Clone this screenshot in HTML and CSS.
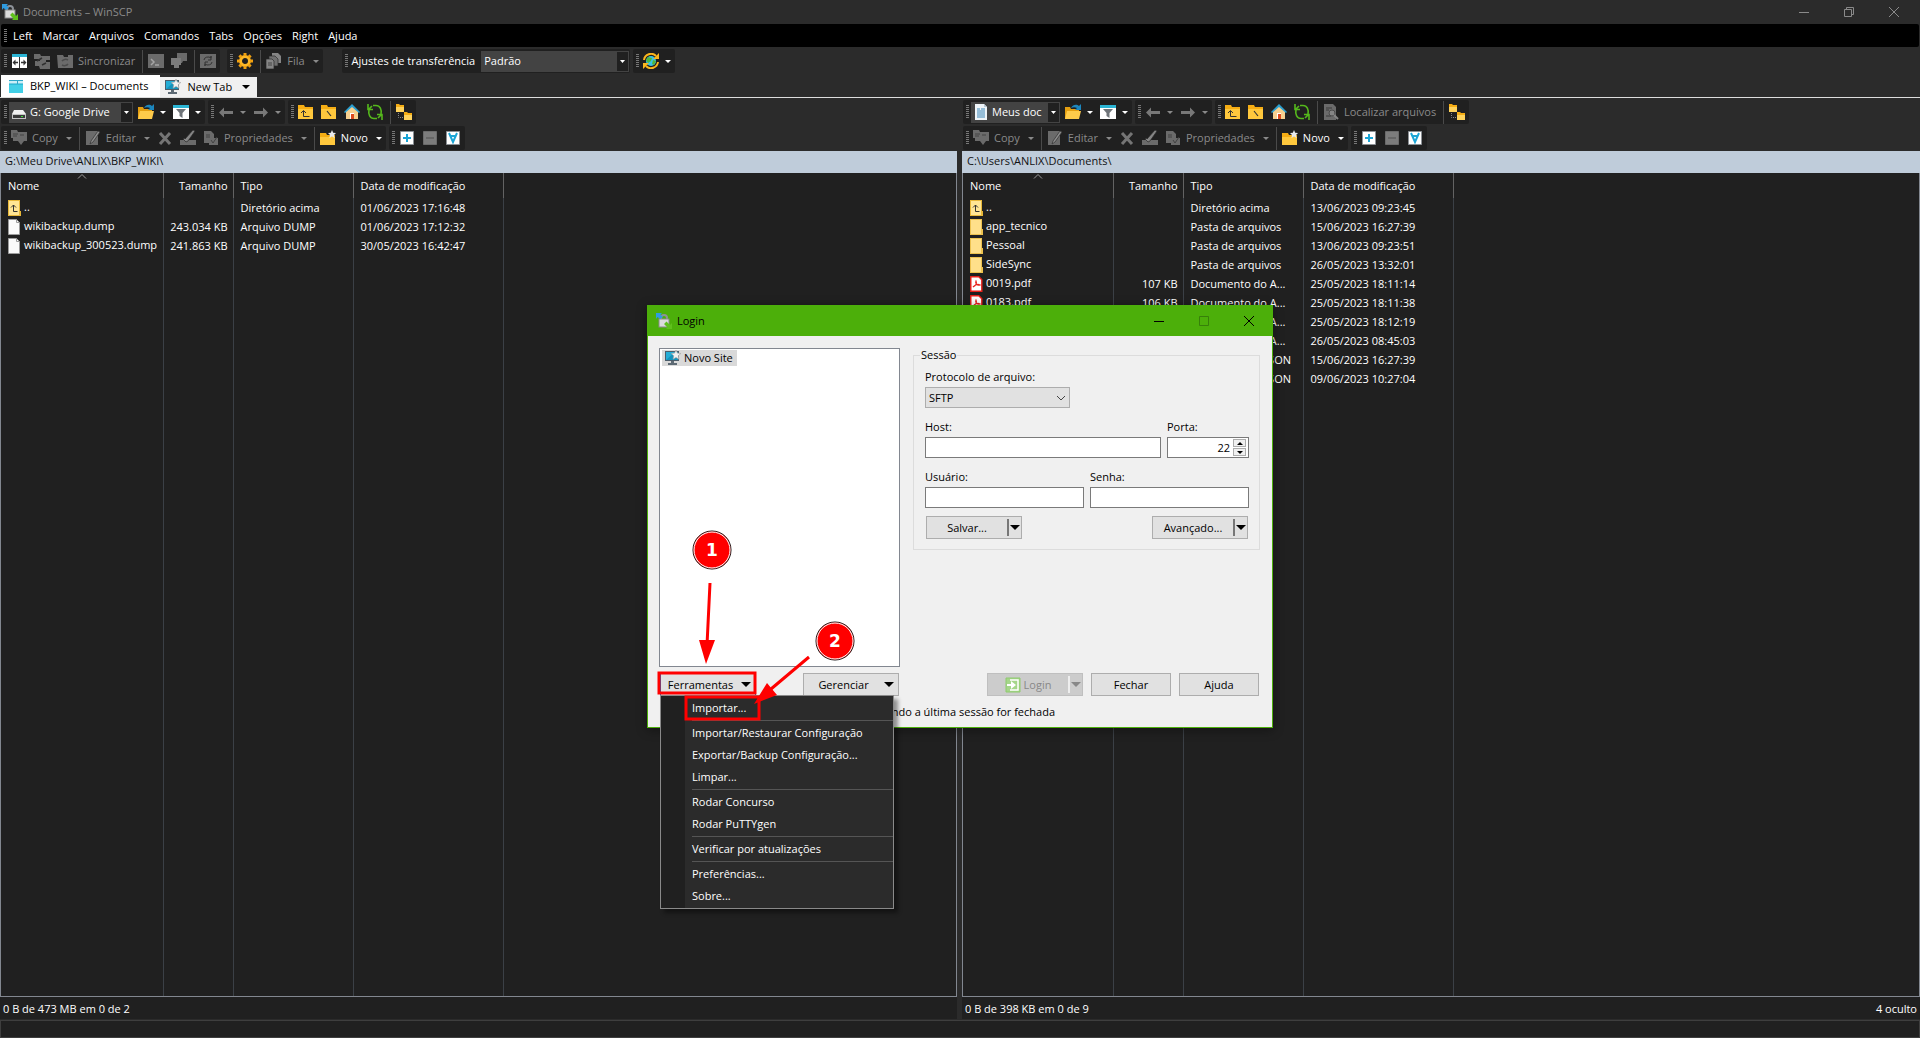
FILE: index.html
```html
<!DOCTYPE html>
<html lang="pt-BR">
<head>
  <meta charset="UTF-8">
  <meta name="viewport" content="width=device-width, initial-scale=1.0">
  <title>Documents – WinSCP</title>
  <link rel="stylesheet" href="styles.css">
</head>
<body>
  <!-- Icon sprite -->
  <svg class="sprite" aria-hidden="true">
    <symbol id="i-app" viewBox="0 0 16 16">
      <path d="M5 7V5a3 3 0 0 1 6 0v2" fill="none" stroke="#8d9299" stroke-width="2"/>
      <rect x="3" y="6" width="10" height="8" fill="#dcdcdc" stroke="#8a8a8a"/>
      <path d="M0 0h6L4.500 1.500 7 4 4 6 1.500 4 0 6z" fill="#2f9be0"/>
      <path d="M16 16h-6l1.500-1.500L8 11l2.500-2.500L14 12l2-2z" fill="#5fc01c"/>
    </symbol>
    <symbol id="i-sync-browse" viewBox="0 0 16 16">
      <path d="M1 1h15v14H1z" fill="#fff"/><path d="M1 1h15v3H1z" fill="#2bb4d4"/>
      <path d="M8.500 4v11" stroke="#333"/><path d="M4 9.500h3M10 9.500h3" stroke="#333" stroke-width="1.500"/>
      <path d="M1.500 9.500l3-3v6zM15.500 9.500l-3-3v6z" fill="#333"/>
    </symbol>
    <symbol id="i-compare" viewBox="0 0 16 16">
      <path d="M0 1h6l1 2h9v4h-4v2h4v7H6l-1-3H1V8h5V6H0z" fill="#6b6b6b"/><path d="M3 8l5-3M8 12l4-2" stroke="#303030" stroke-width="1.500"/>
    </symbol>
    <symbol id="i-sync" viewBox="0 0 16 16">
      <path d="M0 2h6l1 2h4V2h5v13H1z" fill="#6b6b6b"/><path d="M5 8a4 3 0 0 1 6-1M11 11a4 3 0 0 1-6 1" fill="none" stroke="#4b4b4b" stroke-width="1.500"/>
    </symbol>
    <symbol id="i-term" viewBox="0 0 16 16">
      <path d="M0 1h16v14H0z" fill="#6b6b6b"/><path d="M3 6l3 3-3 3M7 12h4" fill="none" stroke="#a5a5a5" stroke-width="1.500"/>
    </symbol>
    <symbol id="i-putty" viewBox="0 0 16 16">
      <path d="M6 0h10v8h-4l-1 2H0V5h6z" fill="#6b6b6b"/><path d="M0 5h10v7H0zM3 12h5v3H3z" fill="#7c7c7c"/>
    </symbol>
    <symbol id="i-keep" viewBox="0 0 16 16">
      <path d="M0 1h16v14H0z" fill="#6b6b6b"/><path d="M4 7a4 3 0 0 1 7-2V3v4H8M12 9a4 3 0 0 1-7 2v2V9h3" fill="none" stroke="#333"/>
    </symbol>
    <symbol id="i-gear" viewBox="0 0 16 16">
      <circle cx="8" cy="8" r="4.500" fill="none" stroke="#fdb827" stroke-width="3"/>
      <path d="M8 0v3M8 13v3M0 8h3M13 8h3M2.400 2.400l2 2M11.600 11.600l2 2M2.400 13.600l2-2M11.600 4.400l2-2" stroke="#f0a010" stroke-width="3"/>
    </symbol>
    <symbol id="i-queue" viewBox="0 0 16 16">
      <path d="M6 0h6l3 3v7H6z" fill="#858585"/><path d="M3 3h6l3 3v7H3z" fill="#707070" stroke="#292929" stroke-width=".7"/><path d="M0 6h6l2 2v8H0z" fill="#858585" stroke="#292929" stroke-width=".7"/><path d="M2 10h4M2 12h4" stroke="#444"/>
    </symbol>
    <symbol id="i-globe" viewBox="0 0 16 16">
      <circle cx="8" cy="8" r="5" fill="#38c4e4"/><path d="M5 4l4 1-1 3-3 2-2-3zM10 7l3 1-2 4-2-1z" fill="#4fb73a"/>
      <path d="M1 7a7 7 0 0 1 12-4M15 9a7 7 0 0 1-12 4" fill="none" stroke="#fbb61c" stroke-width="2"/>
      <path d="M16 0v6h-6zM0 16v-6h6z" fill="#fbb61c"/>
    </symbol>
    <symbol id="i-tab" viewBox="0 0 16 16">
      <path d="M1 2h14v13H1z" fill="#42cfe6"/><path d="M1 3h14v3H1z" fill="#c9eef7"/><path d="M1 6h14" stroke="#1ba8c8"/><path d="M1 2h14v1H1z" fill="#2da6c8"/><path d="M9.500 3v3" fill="none" stroke="#2da6c8"/>
    </symbol>
    <symbol id="i-site" viewBox="0 0 16 16">
      <path d="M0 1h14v10H0z" fill="#4b5d6b"/><path d="M1 2h12v8H1z" fill="#24add6"/><path d="M1 10l9-8h3v8z" fill="#1493bd"/><path d="M6 11h3v2H6zM3 13h9v2H3z" fill="#5d6a74"/>
      <path d="M11 0l1.400 3.100 3.400.4-2.500 2.300.7 3.400-3-1.700-3 1.700.7-3.400L6.200 3.500l3.400-.4z" fill="#f2f2f2" stroke="#9c9c9c" stroke-width=".6"/>
    </symbol>
    <symbol id="i-drive" viewBox="0 0 16 16">
      <path d="M3 6h9l3 4H1z" fill="#f1f1f1"/><path d="M1 10h14v5H1z" fill="#c5c5c5"/><path d="M2 11h12v3H2z" fill="#3a3a3a"/><path d="M10 12h2v1h-2z" fill="#3fe03f"/>
    </symbol>
    <symbol id="i-docs" viewBox="0 0 16 16">
      <path d="M2 0h9l3 3v13H2z" fill="#eef4f8"/><path d="M4 5h3M8 5h4M4 7h8M4 9h8M4 11h8M4 13h8" stroke="#3c87b8"/><path d="M11 0v3h3" fill="#b9c9d4"/>
    </symbol>
    <symbol id="i-open" viewBox="0 0 16 16">
      <path d="M0 3h5l1 2h8v10H0z" fill="#e59f10"/><path d="M2 7h14l-2 8H0z" fill="#ffcb4a"/><path d="M6 4c2-4 6-4 8-2l2-2v6h-6l2-2c-2-1-4-1-6 0z" fill="#1c86bd"/>
    </symbol>
    <symbol id="i-filter" viewBox="0 0 16 16">
      <path d="M0 1h16v14H0z" fill="#fff"/><path d="M0 1h16v3H0z" fill="#2bb4d4"/><path d="M3 5h10L9.500 9v5l-3-2V9z" fill="#6f7479"/>
    </symbol>
    <symbol id="i-back" viewBox="0 0 16 16"><path d="M1 8.500l5-5v3.500h9v3H6v3.500z" fill="#787878"/></symbol>
    <symbol id="i-fwd" viewBox="0 0 16 16"><path d="M15 8.500l-5-5v3.500H1v3h9v3.500z" fill="#787878"/></symbol>
    <symbol id="i-up" viewBox="0 0 16 16">
      <path d="M0 1h6l1 2h8v12H0z" fill="#f5ad14"/><path d="M0 5h15v10H0z" fill="#ffc83d"/><path d="M5.500 7v5.500h6M3 9l2.500-2.500L8 9" fill="none" stroke="#333"/>
    </symbol>
    <symbol id="i-root" viewBox="0 0 16 16">
      <path d="M0 1h6l1 2h8v12H0z" fill="#f5ad14"/><path d="M0 5h15v10H0z" fill="#ffc83d"/><path d="M6 7l4 5" stroke="#333" stroke-width="1.200"/>
    </symbol>
    <symbol id="i-home" viewBox="0 0 16 16">
      <path d="M2 7l6-6 6 6v8H2z" fill="#f6d08f"/><path d="M0 8l8-8 8 8-1 1-7-6-7 6z" fill="#2b9fd0"/><path d="M6 9h4v6H6z" fill="#fff"/><path d="M7 10h3v5H7z" fill="#dd4b1f"/>
    </symbol>
    <symbol id="i-refresh" viewBox="0 0 16 16">
      <path d="M6 1.500h3c4 0 6 4 5 9M10 14.500H7c-4 0-6-4-5-9" fill="none" stroke="#55b81c" stroke-width="1.600"/>
      <path d="M1 0v5.500h5M15 16v-5.500h-5M2 5l3-3M14 11l-3 3" fill="none" stroke="#55b81c" stroke-width="1.600"/>
    </symbol>
    <symbol id="i-tree" viewBox="0 0 16 16">
      <path d="M0 0h3l1 1h4v7H0zM8 8h3l1 1h4v7H8z" fill="#f5ad14"/><path d="M0 3h8v5H0zM8 11h8v5H8z" fill="#ffd35c"/><path d="M2.500 9v4.500H8" fill="none" stroke="#8b8b8b" stroke-dasharray="1 1"/>
    </symbol>
    <symbol id="i-find" viewBox="0 0 16 16">
      <path d="M1 0h9l3 3v13H1z" fill="#6b6b6b"/><path d="M3 4h6M3 6h3M3 12h5" stroke="#3a3a3a"/><circle cx="9" cy="9" r="3" fill="#858585" stroke="#4a4a4a"/><path d="M11 11l4 4" stroke="#858585" stroke-width="2"/>
    </symbol>
    <symbol id="i-copy" viewBox="0 0 16 16">
      <path d="M0 0h6l1 2h9v9h-3l-3 4-3-4H2V8H0z" fill="#6b6b6b"/><path d="M2 4h5M2 6h4M9 5h4" stroke="#454545"/>
    </symbol>
    <symbol id="i-edit" viewBox="0 0 16 16">
      <path d="M1 1h12v14H1z" fill="#6b6b6b"/><path d="M6 11l7-10 2 1-7 10-3 2z" fill="#8d8d8d" stroke="#303030" stroke-width=".7"/>
    </symbol>
    <symbol id="i-del" viewBox="0 0 16 16"><path d="M3 3l10 11M13 3L3 14" stroke="#757575" stroke-width="3"/></symbol>
    <symbol id="i-rename" viewBox="0 0 16 16">
      <path d="M0 10h16v5H0z" fill="#6b6b6b"/><path d="M5 9l8-9 2 1-7 10-2 1-3-3 2-1z" fill="#858585" stroke="#292929" stroke-width=".7"/>
    </symbol>
    <symbol id="i-props" viewBox="0 0 16 16">
      <path d="M1 1h7l3 3v4h4v7H6v-2H1z" fill="#6b6b6b"/><path d="M3 5h4M3 7h4M8 10l2 3 4-6" fill="none" stroke="#424242"/>
    </symbol>
    <symbol id="i-new" viewBox="0 0 16 16">
      <path d="M0 3h6l1 2h8v10H0z" fill="#f5ad14"/><path d="M0 7h15v8H0z" fill="#ffc83d"/>
      <path d="M12 0l1.200 2.700 2.800.3-2 2 .6 3-2.600-1.500L9.400 8l.6-3-2-2 2.800-.3z" fill="#e8eaec"/>
    </symbol>
    <symbol id="i-plus" viewBox="0 0 16 16"><path d="M1.500 1.500h13v13h-13z" fill="#fff" stroke="#8c9196"/><path d="M4 8h8M8 4v8" stroke="#1ba5d6" stroke-width="2"/></symbol>
    <symbol id="i-minus" viewBox="0 0 16 16"><path d="M1.500 1.500h13v13h-13z" fill="#7c7c7c" stroke="#6b6b6b"/><path d="M4 8h8" stroke="#666" stroke-width="2"/></symbol>
    <symbol id="i-sel" viewBox="0 0 16 16"><path d="M1.500 1.500h13v13h-13z" fill="#fff" stroke="#8c9196"/><path d="M4 3l4 9 4-9M6 6h4" fill="none" stroke="#1ba5d6" stroke-width="2"/></symbol>
    <symbol id="i-parent" viewBox="0 0 13 16"><path d="M0 0h12v11h1v5H0z" fill="#e8b83a"/><path d="M1 1h10v14H1z" fill="#ffe594"/><path d="M5.500 5v6.500h4M3 7.500l2.500-2.500L8 7.500" fill="none" stroke="#333"/></symbol>
    <symbol id="i-folder" viewBox="0 0 13 16"><path d="M0 0h12v10h1v6H0z" fill="#edc24f"/><path d="M1 1h10v14H1z" fill="#ffe08a"/></symbol>
    <symbol id="i-file" viewBox="0 0 13 16"><path d="M.5.5h8l3 3v12H.5z" fill="#fafafa" stroke="#9c9c9c"/><path d="M8.500.5v3h3" fill="none" stroke="#9c9c9c"/></symbol>
    <symbol id="i-pdf" viewBox="0 0 13 16"><path d="M.8.8h8l3 3v11.400H.8z" fill="#fff" stroke="#e8201a" stroke-width="1.400"/><path d="M3 11c3-1 4-4 3-6-1 2 1 5 4 4-2-1-5 0-7 2z" fill="none" stroke="#e8201a" stroke-width="1.200"/></symbol>
    <symbol id="i-login" viewBox="0 0 16 16"><path d="M1 1h14v14H1z" fill="#a5d68a" stroke="#8fca6e"/><path d="M5 3h8v10H5" fill="none" stroke="#fff" stroke-width="1.500"/><path d="M2 7h4V4l5 4-5 4V9H2z" fill="#fff"/></symbol>
    <symbol id="i-sort" viewBox="0 0 10 5"><path d="M1 4.500l4-4 4 4" fill="none" stroke="#9b9b9b"/></symbol>
  </svg>

  <div class="window">
    <header class="titlebar">
      <svg class="icon"><use href="#i-app"/></svg>
      <span>Documents – WinSCP</span>
      <div class="window-buttons">
        <button type="button" aria-label="Minimizar"><svg viewBox="0 0 10 10"><path d="M0 5.500h10"/></svg></button>
        <button type="button" aria-label="Restaurar"><svg viewBox="0 0 10 10"><path d="M.5 2.500h7v7h-7zM2.500 2.500v-2h7v7h-2"/></svg></button>
        <button type="button" aria-label="Fechar janela"><svg viewBox="0 0 10 10"><path d="M0 0l10 10M10 0L0 10"/></svg></button>
      </div>
    </header>

    <nav class="menubar">
      <i class="grip"></i>
      <button type="button">Left</button>
      <button type="button">Marcar</button>
      <button type="button">Arquivos</button>
      <button type="button">Comandos</button>
      <button type="button">Tabs</button>
      <button type="button">Opções</button>
      <button type="button">Right</button>
      <button type="button">Ajuda</button>
    </nav>

    <div class="toolbar-row main-tools">
      <div class="toolbar">
        <i class="grip"></i>
        <button type="button" aria-label="Navegação sincronizada"><svg class="icon"><use href="#i-sync-browse"/></svg></button>
        <button type="button" disabled aria-label="Comparar"><svg class="icon"><use href="#i-compare"/></svg></button>
        <button type="button" disabled><svg class="icon"><use href="#i-sync"/></svg>Sincronizar</button>
        <i class="sep"></i>
        <button type="button" disabled aria-label="Terminal"><svg class="icon"><use href="#i-term"/></svg></button>
        <button type="button" disabled aria-label="PuTTY"><svg class="icon"><use href="#i-putty"/></svg></button>
        <i class="sep"></i>
        <button type="button" disabled aria-label="Manter atualizado"><svg class="icon"><use href="#i-keep"/></svg></button>
      </div>
      <div class="toolbar">
        <i class="grip"></i>
        <button type="button" aria-label="Preferências"><svg class="icon"><use href="#i-gear"/></svg></button>
        <i class="sep"></i>
        <button type="button" disabled><svg class="icon"><use href="#i-queue"/></svg>Fila<i class="caret"></i></button>
      </div>
      <div class="toolbar transfer-tools">
        <i class="grip"></i>
        <label for="transfer">Ajustes de transferência</label>
        <select id="transfer" class="dark-select"><option>Padrão</option></select>
      </div>
      <div class="toolbar">
        <i class="grip"></i>
        <button type="button" aria-label="Atualizações"><svg class="icon"><use href="#i-globe"/></svg><i class="caret"></i></button>
      </div>
    </div>

    <div class="tabs">
      <button type="button" class="tab active"><svg class="icon"><use href="#i-tab"/></svg>BKP_WIKI – Documents</button>
      <button type="button" class="tab"><svg class="icon"><use href="#i-site"/></svg>New Tab<i class="caret big"></i></button>
    </div>

    <main class="panels">
      <section class="panel">
        <div class="toolbar-row">
          <div class="toolbar">
            <i class="grip"></i>
            <label class="combo drive"><svg class="icon"><use href="#i-drive"/></svg><select class="dark-select" aria-label="Unidade"><option>G: Google Drive</option></select></label>
            <button type="button" aria-label="Abrir diretório"><svg class="icon"><use href="#i-open"/></svg><i class="caret"></i></button>
            <button type="button" aria-label="Filtro"><svg class="icon"><use href="#i-filter"/></svg><i class="caret"></i></button>
          </div>
          <div class="toolbar">
            <i class="grip"></i>
            <button type="button" disabled aria-label="Voltar"><svg class="icon"><use href="#i-back"/></svg><i class="caret"></i></button>
            <button type="button" disabled aria-label="Avançar"><svg class="icon"><use href="#i-fwd"/></svg><i class="caret"></i></button>
          </div>
          <div class="toolbar">
            <i class="grip"></i>
            <button type="button" aria-label="Diretório acima"><svg class="icon"><use href="#i-up"/></svg></button>
            <button type="button" aria-label="Raiz"><svg class="icon"><use href="#i-root"/></svg></button>
            <button type="button" aria-label="Início"><svg class="icon"><use href="#i-home"/></svg></button>
            <button type="button" aria-label="Atualizar"><svg class="icon"><use href="#i-refresh"/></svg></button>
            <i class="sep"></i>
            <button type="button" aria-label="Árvore"><svg class="icon"><use href="#i-tree"/></svg></button>
          </div>
        </div>
        <div class="toolbar-row">
          <div class="toolbar">
            <i class="grip"></i>
            <button type="button" disabled><svg class="icon"><use href="#i-copy"/></svg>Copy<i class="caret"></i></button>
            <i class="sep"></i>
            <button type="button" disabled><svg class="icon"><use href="#i-edit"/></svg>Editar<i class="caret"></i></button>
            <button type="button" disabled aria-label="Apagar"><svg class="icon"><use href="#i-del"/></svg></button>
            <button type="button" disabled aria-label="Renomear"><svg class="icon"><use href="#i-rename"/></svg></button>
            <button type="button" disabled><svg class="icon"><use href="#i-props"/></svg>Propriedades<i class="caret"></i></button>
            <i class="sep"></i>
            <button type="button"><svg class="icon"><use href="#i-new"/></svg>Novo<i class="caret"></i></button>
          </div>
          <div class="toolbar">
            <i class="grip"></i>
            <button type="button" aria-label="Selecionar"><svg class="icon"><use href="#i-plus"/></svg></button>
            <button type="button" disabled aria-label="Desmarcar"><svg class="icon"><use href="#i-minus"/></svg></button>
            <button type="button" aria-label="Selecionar todos"><svg class="icon"><use href="#i-sel"/></svg></button>
          </div>
        </div>
        <div class="path">G:\Meu Drive\ANLIX\BKP_WIKI\</div>
        <div class="list">
          <table class="files local">
            <colgroup><col class="c-name"><col class="c-size"><col class="c-type"><col class="c-date"><col></colgroup>
            <thead>
              <tr><th>Nome<svg class="sort"><use href="#i-sort"/></svg></th><th class="num">Tamanho</th><th>Tipo</th><th>Data de modificação</th><th class="rest"></th></tr>
            </thead>
            <tbody>
              <tr><td><svg class="ficon"><use href="#i-parent"/></svg>..</td><td></td><td>Diretório acima</td><td>01/06/2023 17:16:48</td><td></td></tr>
              <tr><td><svg class="ficon"><use href="#i-file"/></svg>wikibackup.dump</td><td class="num">243.034 KB</td><td>Arquivo DUMP</td><td>01/06/2023 17:12:32</td><td></td></tr>
              <tr><td><svg class="ficon"><use href="#i-file"/></svg>wikibackup_300523.dump</td><td class="num">241.863 KB</td><td>Arquivo DUMP</td><td>30/05/2023 16:42:47</td><td></td></tr>
              <tr class="filler"><td></td><td></td><td></td><td></td><td></td></tr>
            </tbody>
          </table>
        </div>
        <div class="summary"><span>0 B de 473 MB em 0 de 2</span></div>
      </section>

      <section class="panel">
        <div class="toolbar-row">
          <div class="toolbar">
            <i class="grip"></i>
            <label class="combo docs"><svg class="icon"><use href="#i-docs"/></svg><select class="dark-select" aria-label="Unidade direita"><option>Meus doc</option></select></label>
            <button type="button" aria-label="Abrir diretório"><svg class="icon"><use href="#i-open"/></svg><i class="caret"></i></button>
            <button type="button" aria-label="Filtro"><svg class="icon"><use href="#i-filter"/></svg><i class="caret"></i></button>
          </div>
          <div class="toolbar">
            <i class="grip"></i>
            <button type="button" disabled aria-label="Voltar"><svg class="icon"><use href="#i-back"/></svg><i class="caret"></i></button>
            <button type="button" disabled aria-label="Avançar"><svg class="icon"><use href="#i-fwd"/></svg><i class="caret"></i></button>
          </div>
          <div class="toolbar">
            <i class="grip"></i>
            <button type="button" aria-label="Diretório acima"><svg class="icon"><use href="#i-up"/></svg></button>
            <button type="button" aria-label="Raiz"><svg class="icon"><use href="#i-root"/></svg></button>
            <button type="button" aria-label="Início"><svg class="icon"><use href="#i-home"/></svg></button>
            <button type="button" aria-label="Atualizar"><svg class="icon"><use href="#i-refresh"/></svg></button>
            <i class="sep"></i>
            <button type="button" disabled><svg class="icon"><use href="#i-find"/></svg>Localizar arquivos</button>
            <i class="sep"></i>
            <button type="button" aria-label="Árvore"><svg class="icon"><use href="#i-tree"/></svg></button>
          </div>
        </div>
        <div class="toolbar-row">
          <div class="toolbar">
            <i class="grip"></i>
            <button type="button" disabled><svg class="icon"><use href="#i-copy"/></svg>Copy<i class="caret"></i></button>
            <i class="sep"></i>
            <button type="button" disabled><svg class="icon"><use href="#i-edit"/></svg>Editar<i class="caret"></i></button>
            <button type="button" disabled aria-label="Apagar"><svg class="icon"><use href="#i-del"/></svg></button>
            <button type="button" disabled aria-label="Renomear"><svg class="icon"><use href="#i-rename"/></svg></button>
            <button type="button" disabled><svg class="icon"><use href="#i-props"/></svg>Propriedades<i class="caret"></i></button>
            <i class="sep"></i>
            <button type="button"><svg class="icon"><use href="#i-new"/></svg>Novo<i class="caret"></i></button>
          </div>
          <div class="toolbar">
            <i class="grip"></i>
            <button type="button" aria-label="Selecionar"><svg class="icon"><use href="#i-plus"/></svg></button>
            <button type="button" disabled aria-label="Desmarcar"><svg class="icon"><use href="#i-minus"/></svg></button>
            <button type="button" aria-label="Selecionar todos"><svg class="icon"><use href="#i-sel"/></svg></button>
          </div>
        </div>
        <div class="path">C:\Users\ANLIX\Documents\</div>
        <div class="list">
          <table class="files remote">
            <colgroup><col class="c-name"><col class="c-size"><col class="c-type"><col class="c-date"><col></colgroup>
            <thead>
              <tr><th>Nome<svg class="sort"><use href="#i-sort"/></svg></th><th class="num">Tamanho</th><th>Tipo</th><th>Data de modificação</th><th class="rest"></th></tr>
            </thead>
            <tbody>
              <tr><td><svg class="ficon"><use href="#i-parent"/></svg>..</td><td></td><td>Diretório acima</td><td>13/06/2023 09:23:45</td><td></td></tr>
              <tr><td><svg class="ficon"><use href="#i-folder"/></svg>app_tecnico</td><td></td><td>Pasta de arquivos</td><td>15/06/2023 16:27:39</td><td></td></tr>
              <tr><td><svg class="ficon"><use href="#i-folder"/></svg>Pessoal</td><td></td><td>Pasta de arquivos</td><td>13/06/2023 09:23:51</td><td></td></tr>
              <tr><td><svg class="ficon"><use href="#i-folder"/></svg>SideSync</td><td></td><td>Pasta de arquivos</td><td>26/05/2023 13:32:01</td><td></td></tr>
              <tr><td><svg class="ficon"><use href="#i-pdf"/></svg>0019.pdf</td><td class="num">107 KB</td><td>Documento do A...</td><td>25/05/2023 18:11:14</td><td></td></tr>
              <tr><td><svg class="ficon"><use href="#i-pdf"/></svg>0183.pdf</td><td class="num">106 KB</td><td>Documento do A...</td><td>25/05/2023 18:11:38</td><td></td></tr>
              <tr><td></td><td></td><td>Documento do A...</td><td>25/05/2023 18:12:19</td><td></td></tr>
              <tr><td></td><td></td><td>Documento do A...</td><td>26/05/2023 08:45:03</td><td></td></tr>
              <tr><td></td><td></td><td>Arquivo Fonte JSON</td><td>15/06/2023 16:27:39</td><td></td></tr>
              <tr><td></td><td></td><td>Arquivo Fonte JSON</td><td>09/06/2023 10:27:04</td><td></td></tr>
              <tr class="filler"><td></td><td></td><td></td><td></td><td></td></tr>
            </tbody>
          </table>
        </div>
        <div class="summary"><span>0 B de 398 KB em 0 de 9</span><span>4 oculto</span></div>
      </section>
    </main>

    <footer class="statusbar"></footer>
  </div>

  <div class="overlay">
    <div class="dialog" role="dialog" aria-labelledby="dialog-title">
      <div class="dialog-title">
        <svg class="icon"><use href="#i-app"/></svg>
        <span id="dialog-title">Login</span>
        <div class="window-buttons">
          <button type="button" aria-label="Minimizar login"><svg viewBox="0 0 10 10"><path d="M0 5.500h10"/></svg></button>
          <button type="button" disabled aria-label="Maximizar login"><svg viewBox="0 0 10 10"><path d="M.5.500h9v9h-9z"/></svg></button>
          <button type="button" aria-label="Fechar login"><svg viewBox="0 0 10 10"><path d="M0 0l10 10M10 0L0 10"/></svg></button>
        </div>
      </div>

      <form class="dialog-body">
        <div class="dialog-main">
          <div class="site-list">
            <button type="button" class="site"><svg class="icon"><use href="#i-site"/></svg>Novo Site</button>
          </div>
          <fieldset class="session">
            <legend>Sessão</legend>
            <div class="field protocol">
              <label for="protocol">Protocolo de arquivo:</label>
              <select id="protocol"><option>SFTP</option></select>
            </div>
            <div class="fields">
              <div class="field grow">
                <label for="host">Host:</label>
                <input id="host" type="text">
              </div>
              <div class="field port">
                <label for="port">Porta:</label>
                <div class="spin">
                  <input id="port" type="text" value="22">
                  <div class="spin-buttons">
                    <button type="button" aria-label="Aumentar"><i class="caret up"></i></button>
                    <button type="button" aria-label="Diminuir"><i class="caret"></i></button>
                  </div>
                </div>
              </div>
            </div>
            <div class="fields">
              <div class="field grow">
                <label for="user">Usuário:</label>
                <input id="user" type="text">
              </div>
              <div class="field grow">
                <label for="pass">Senha:</label>
                <input id="pass" type="password">
              </div>
            </div>
            <div class="session-actions">
              <button type="button" class="btn split"><span>Salvar...</span><i class="caret big"></i></button>
              <button type="button" class="btn split"><span>Avançado...</span><i class="caret big"></i></button>
            </div>
          </fieldset>
        </div>

        <div class="dialog-actions">
          <div class="tools">
            <button type="button" class="btn menu-btn focused"><span>Ferramentas</span><i class="caret big"></i></button>
            <ul class="menu">
              <li><button type="button">Importar...</button></li>
              <li class="line"><button type="button">Importar/Restaurar Configuração</button></li>
              <li><button type="button">Exportar/Backup Configuração...</button></li>
              <li><button type="button">Limpar...</button></li>
              <li class="line"><button type="button">Rodar Concurso</button></li>
              <li><button type="button">Rodar PuTTYgen</button></li>
              <li class="line"><button type="button">Verificar por atualizações</button></li>
              <li class="line"><button type="button">Preferências...</button></li>
              <li><button type="button">Sobre...</button></li>
            </ul>
          </div>
          <button type="button" class="btn menu-btn"><span>Gerenciar</span><i class="caret big"></i></button>
          <div class="right-actions">
            <button type="submit" class="btn split" disabled><span><svg class="icon"><use href="#i-login"/></svg>Login</span><i class="caret big"></i></button>
            <button type="button" class="btn">Fechar</button>
            <button type="button" class="btn">Ajuda</button>
          </div>
        </div>
        <label class="show-login"><input type="checkbox"><span>Mostrar o Login quando a última sessão for fechada</span></label>
      </form>

      <!-- Numbered steps drawn over the dialog -->
      <svg class="steps" viewBox="0 0 627 424">
        <g fill="none" stroke="#f00" stroke-width="3">
          <rect x="12" y="368" width="96" height="20"/>
          <rect x="39" y="392" width="73" height="22"/>
          <path d="M63 278L60 340M162 352L124 384"/>
        </g>
        <path d="M52 335h16l-9 24zM120 378l10 12-23 9z" fill="#f00"/>
        <g fill="#f00" stroke="#111"><circle cx="65" cy="245" r="19"/><circle cx="188" cy="336" r="19"/></g>
        <g fill="none" stroke="#fff"><circle cx="65" cy="245" r="18"/><circle cx="188" cy="336" r="18"/></g>
        <text x="65" y="251">1</text>
        <text x="188" y="342">2</text>
      </svg>
    </div>
  </div>
</body>
</html>
```

FILE: styles.css
```css
* {
  box-sizing: border-box;
}
body {
  margin: 0;
  position: relative;
  background: #2b2b2b;
  color: #fff;
  font-family: "Open Sans", "Noto Sans", sans-serif;
  font-size: 11px;
  line-height: 16px;
}
button, input, select {
  font: inherit;
  color: inherit;
  margin: 0;
}
button {
  background: none;
  border: 0;
  padding: 0;
}
.sprite {
  display: none;
}
.icon {
  width: 16px;
  height: 16px;
  flex: none;
}
.window {
  display: flex;
  flex-direction: column;
  height: 100vh;
}

/* Title and menu */
.titlebar {
  display: flex;
  align-items: center;
  gap: 5px;
  height: 24px;
  padding: 0 4px 0 2px;
  color: #8a8a8a;
}
.window-buttons {
  display: flex;
  align-self: stretch;
  margin-left: auto;
}
.window-buttons button {
  display: grid;
  place-items: center;
  width: 45px;
}
.window-buttons svg {
  width: 10px;
  height: 10px;
  fill: none;
  stroke: currentColor;
  overflow: visible;
}
.menubar {
  display: flex;
  align-items: center;
  height: 23px;
  margin: 0 1px;
  padding-left: 3px;
  border-radius: 2px;
  background: #000;
}
.menubar button {
  padding: 0 5px;
}
.grip {
  flex: none;
  width: 3px;
  height: 14px;
  margin-right: 1px;
  background: repeating-linear-gradient(#777 0 1px, transparent 1px 2px);
}

/* Toolbars */
.toolbar-row {
  display: flex;
  gap: 3px;
  padding: 2px 0 0 1px;
}
.toolbar {
  display: flex;
  align-items: center;
  height: 24px;
  padding-left: 3px;
  border-radius: 2px;
  background: #202020;
}
.toolbar button {
  display: flex;
  align-items: center;
  gap: 5px;
  padding: 0 4px 0 3px;
}
.toolbar button:disabled {
  color: #8a8a8a;
}
.main-tools .toolbar + .toolbar {
  margin-left: 4px;
}
.main-tools .transfer-tools.toolbar {
  margin-left: 16px;
  padding-right: 1px;
}
.main-tools .transfer-tools + .toolbar {
  margin-left: 0;
}
.transfer-tools label {
  margin: 0 6px 0 3px;
}
.sep {
  width: 1px;
  height: 23px;
  margin: 0 2px 0 3px;
  background: #4a4a4a;
}
.caret {
  flex: none;
  width: 0;
  margin-left: 1px;
  border: 3px solid transparent;
  border-top-color: currentColor;
  border-bottom: 0;
}
.caret.big {
  border-width: 4px 4px 0;
}
.toolbar button:not([aria-label]) .caret {
  margin-left: 3px;
}
.dark-select {
  appearance: none;
  width: 148px;
  height: 21px;
  padding: 0 12px 0 2px;
  border: 1px solid #434343;
  border-radius: 0;
  background: url("data:image/svg+xml,%3Csvg xmlns='http://www.w3.org/2000/svg' width='11' height='19'%3E%3Cpath d='M0 0h11v19H0z' fill='%23202020'/%3E%3Cpath d='M3 8h5L5.500 11z' fill='%23fff'/%3E%3C/svg%3E") right / 11px 19px no-repeat #434343;
}
.combo {
  display: flex;
  align-items: center;
  height: 21px;
  padding-left: 2px;
  margin: 0 2px 0 1px;
  background: #434343;
}
.combo.drive {
  width: 124px;
}
.combo.docs {
  width: 89px;
}
.combo .dark-select {
  flex: 1;
  width: 0;
}

/* Session tabs */
.tabs {
  display: flex;
  align-items: flex-end;
  height: 25px;
  padding-left: 1px;
  border-bottom: 1px solid #ddd;
}
.tab {
  display: flex;
  align-items: center;
  gap: 6px;
  height: 20px;
  padding: 0 7px 0 5px;
  background: #f0f0f0;
  color: #000;
}
.tab.active {
  height: 22px;
  padding: 0 12px 0 7px;
  background: #fff;
}
.tab .caret {
  margin-left: 4px;
}

/* File panels */
.panels {
  flex: 1;
  display: grid;
  grid-template-columns: 957fr 958fr;
  gap: 5px;
  min-height: 0;
}
.panel {
  display: flex;
  flex-direction: column;
  min-width: 0;
}
.path {
  height: 22px;
  margin-top: 1px;
  padding: 2px 5px;
  background: #bfccda;
  color: #111;
}
.list {
  flex: 1;
  min-height: 0;
  border: 1px solid #828790;
  border-top: 0;
  background: #202020;
}
.files {
  width: 100%;
  height: 100%;
  table-layout: fixed;
  border-collapse: collapse;
}
.files th {
  position: relative;
  height: 25px;
  padding: 0 7px;
  border-right: 1px solid #636363;
  font-weight: 400;
  text-align: left;
}
.files td {
  height: 19px;
  padding: 0 7px;
  border-right: 1px solid #3b4046;
  white-space: nowrap;
}
.files .num {
  padding: 0 5px 0 0;
  text-align: right;
}
.files th:last-child, .files td:last-child {
  border-right: 0;
}
.files .filler td {
  height: auto;
}
.files td:first-child {
  padding-right: 0;
}
.sort {
  position: absolute;
  top: 1px;
  left: calc(50% - 5px);
  width: 10px;
  height: 5px;
}
.ficon {
  width: 13px;
  height: 16px;
  margin-right: 3px;
  vertical-align: middle;
}
.c-name { width: 162px; }
.c-size { width: 70px; }
.c-type { width: 120px; }
.c-date { width: 150px; }
.remote .c-name { width: 150px; }
.summary {
  display: flex;
  justify-content: space-between;
  height: 22px;
  padding: 4px 3px 0;
  background: #202020;
}
.statusbar {
  height: 18px;
  margin-top: 1px;
  border: 1px solid #3e3e3e;
  background: #202020;
}

/* Login dialog */
.overlay {
  position: absolute;
  inset: 0;
  display: grid;
  place-items: center;
  padding-bottom: 5px;
}
.dialog {
  position: relative;
  width: 626px;
  border: 1px solid #4caf0a;
  background: #f0f0f0;
  color: #000;
  box-shadow: 0 2px 10px rgba(0, 0, 0, .4);
}
.dialog-title {
  display: flex;
  align-items: center;
  gap: 5px;
  height: 30px;
  padding: 0 1px 0 8px;
  background: #4caf0a;
}
.dialog-title .window-buttons button:disabled {
  color: #37800a;
}
.dialog-body {
  padding: 12px 12px 6px 11px;
  line-height: 14px;
}
.dialog-main {
  display: flex;
  gap: 13px;
}
.site-list {
  width: 241px;
  height: 319px;
  padding: 1px 2px;
  border: 1px solid #828790;
  background: #fff;
}
.site {
  display: flex;
  align-items: center;
  gap: 3px;
  height: 16px;
  padding: 0 4px 0 3px;
  background: #d9d9d9;
}
.session {
  flex: 1;
  align-self: flex-start;
  margin: 0;
  padding: 8px 10px 10px 11px;
  border: 1px solid #dcdcdc;
}
.session legend {
  margin-left: -5px;
  padding: 0 1px;
}
.field label {
  display: block;
  height: 17px;
}
.field input, .field select, .spin {
  display: block;
  width: 100%;
  height: 21px;
  padding: 0 3px;
  border: 1px solid #7a7a7a;
  border-radius: 0;
  background: #fff;
}
.field select {
  appearance: none;
  border-color: #adadad;
  background: url("data:image/svg+xml,%3Csvg xmlns='http://www.w3.org/2000/svg' width='10' height='6'%3E%3Cpath d='M1 1l4 4 4-4' fill='none' stroke='%23444'/%3E%3C/svg%3E") right 3px center no-repeat #e1e1e1;
}
.fields {
  display: flex;
  gap: 6px;
  margin-top: 12px;
}
.grow {
  flex: 1;
}
.protocol {
  width: 145px;
}
.port {
  width: 82px;
}
.field .spin {
  display: flex;
  padding: 1px 2px;
}
.spin input {
  flex: 1;
  width: 0;
  height: 17px;
  border: 0;
  text-align: right;
}
.spin-buttons {
  display: flex;
  flex-direction: column;
  gap: 1px;
  width: 13px;
}
.spin-buttons button {
  display: grid;
  place-items: center;
  height: 8px;
  border: 1px solid #adadad;
  background: #f0f0f0;
}
.spin-buttons .caret {
  margin: 0;
}
.spin-buttons .caret.up {
  border: 3px solid transparent;
  border-bottom-color: currentColor;
  border-top: 0;
}
.session-actions {
  display: flex;
  justify-content: space-between;
  margin-top: 8px;
  padding: 0 1px;
}
.btn {
  display: flex;
  align-items: center;
  justify-content: center;
  width: 80px;
  height: 23px;
  border: 1px solid #adadad;
  background: #e1e1e1;
}
.btn span {
  display: flex;
  align-items: center;
  justify-content: center;
  gap: 3px;
  flex: 1;
}
.btn.split, .btn.menu-btn {
  width: 96px;
}
.btn .caret {
  margin: 0 1px;
  border-width: 5px 5px 0;
}
.split span {
  height: 17px;
  border-right: 2px solid #777;
}
.btn.menu-btn .caret {
  margin-right: 4px;
}
.btn:disabled {
  background: #ccc;
  border-color: #bfbfbf;
  color: #888;
}
.btn:disabled span {
  border-color: #eee;
}
.btn.focused {
  border-color: #0078d7;
}
.dialog-actions {
  display: flex;
  margin-top: 6px;
  padding: 0 1px;
}
.tools {
  position: relative;
  margin-right: 47px;
}
.right-actions {
  display: flex;
  gap: 8px;
  margin-left: auto;
}
.show-login {
  display: flex;
  align-items: center;
  justify-content: space-between;
  width: 396px;
  height: 18px;
  margin-top: 7px;
}
.show-login input {
  width: 13px;
  height: 13px;
  margin: 0 0 0 4px;
}

/* Ferramentas menu */
.menu {
  position: absolute;
  top: 22px;
  left: 0;
  z-index: 1;
  width: 234px;
  margin: 0;
  padding: 1px 0;
  border: 1px solid #8a8a8a;
  background: linear-gradient(90deg, #202020 24px, #2b2b2b 24px);
  box-shadow: 4px 4px 4px rgba(0, 0, 0, .4);
  color: #fff;
  line-height: 22px;
  list-style: none;
}
.menu button {
  display: block;
  width: 100%;
  height: 22px;
  text-align: left;
}
.menu li {
  padding-left: 31px;
}
.menu .line::before {
  content: "";
  display: block;
  height: 1px;
  margin: 1px 0;
  background: #555;
}

/* Numbered steps */
.steps {
  position: absolute;
  top: -1px;
  left: -1px;
  z-index: 2;
  width: 627px;
  height: 424px;
  pointer-events: none;
}
.steps text {
  fill: #fff;
  font-family: "DejaVu Sans", sans-serif;
  font-size: 17px;
  font-weight: 700;
  text-anchor: middle;
}
```
